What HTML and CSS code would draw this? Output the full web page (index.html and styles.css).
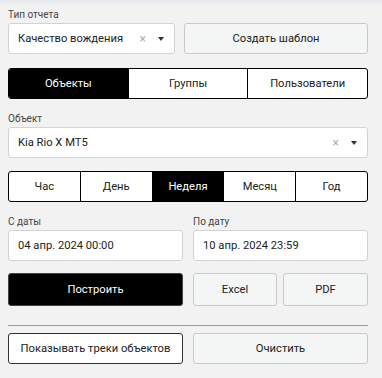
FILE: index.html
```html
<!DOCTYPE html>
<html lang="ru">
<head>
<meta charset="utf-8">
<link rel="stylesheet" href="styles.css">
</head>
<body>
<div class="panel">
  <div class="row-top">
    <div class="field">
      <div class="label">Тип отчета</div>
      <div class="select">
        <span class="value">Качество вождения</span>
        <span class="clear">×</span>
        <span class="caret"></span>
      </div>
    </div>
    <button class="btn btn-light">Создать шаблон</button>
  </div>

  <div class="seg seg-main">
    <div class="seg-item active">Объекты</div>
    <div class="seg-item">Группы</div>
    <div class="seg-item">Пользователи</div>
  </div>

  <div class="field field-obj">
    <div class="label">Объект</div>
    <div class="select">
      <span class="value">Kia Rio X MT5</span>
      <span class="clear">×</span>
      <span class="caret"></span>
    </div>
  </div>

  <div class="seg seg-period">
    <div class="seg-item">Час</div>
    <div class="seg-item">День</div>
    <div class="seg-item active">Неделя</div>
    <div class="seg-item">Месяц</div>
    <div class="seg-item">Год</div>
  </div>

  <div class="row-dates">
    <div class="field">
      <div class="label">С даты</div>
      <div class="input">04 апр. 2024 00:00</div>
    </div>
    <div class="field">
      <div class="label">По дату</div>
      <div class="input">10 апр. 2024 23:59</div>
    </div>
  </div>

  <div class="row-actions">
    <button class="btn btn-dark">Построить</button>
    <div class="exports">
      <button class="btn btn-light">Excel</button>
      <button class="btn btn-light">PDF</button>
    </div>
  </div>

  <div class="sep"></div>

  <div class="row-bottom">
    <button class="btn btn-white">Показывать треки объектов</button>
    <button class="btn btn-light">Очистить</button>
  </div>
</div>
</body>
</html>
```

FILE: styles.css
```css
* { box-sizing: border-box; }
html, body {
  margin: 0;
  padding: 0;
}
body {
  width: 382px;
  height: 378px;
  background: linear-gradient(to bottom, #e6e8ee 0, #f1f1f2 5px, #f2f2f2 8px);
  font-family: Roboto, "Liberation Sans", sans-serif;
  font-size: 11.2px;
  color: #222;
  overflow: hidden;
}
.panel {
  width: 360px;
  margin-left: 8px;
  padding-top: 9px;
  display: flex;
  flex-direction: column;
}
.label {
  font-size: 10px;
  line-height: 12px;
  height: 12px;
  margin-bottom: 2px;
  color: #444;
}
.row-top {
  display: grid;
  grid-template-columns: 167px 1fr;
  column-gap: 9px;
  align-items: end;
}
.select, .input {
  height: 31px;
  background: #fff;
  border: 1px solid #d3d3d3;
  border-radius: 3px;
  display: flex;
  align-items: center;
  padding: 0 9px;
}
.select .value { flex: 1; }
.select .clear {
  color: #b0b0b0;
  font-size: 12px;
  margin-right: 12px;
  line-height: 1;
}
.caret {
  width: 0;
  height: 0;
  border-left: 3.5px solid transparent;
  border-right: 3.5px solid transparent;
  border-top: 4px solid #333;
  margin-right: 1px;
}
.btn {
  height: 31px;
  font-family: inherit;
  font-size: 11.2px;
  color: #222;
  border-radius: 3px;
  padding: 0;
  cursor: pointer;
}
.btn-light {
  background: #f4f5f5;
  border: 1px solid #c9c9c9;
}
.btn-white {
  background: #fff;
  border: 1px solid #333;
}
.btn-dark {
  background: #000;
  color: #fff;
  border: 1px solid #444;
  height: 33px;
}
.seg {
  display: flex;
  height: 31px;
  border: 1px solid #000;
  border-radius: 3px;
  background: #fff;
  overflow: hidden;
}
.seg-item {
  flex: 1;
  display: flex;
  align-items: center;
  justify-content: center;
  border-left: 1px solid #000;
}
.seg-item:first-child { border-left: none; }
.seg-item.active {
  background: #000;
  color: #fff;
}
.seg-main { margin-top: 14px; }
.field-obj { margin-top: 14px; }
.seg-period { margin-top: 13px; }
.row-dates {
  margin-top: 14px;
  display: grid;
  grid-template-columns: 1fr 1fr;
  column-gap: 10px;
}
.row-actions {
  margin-top: 12px;
  display: grid;
  grid-template-columns: 1fr 1fr;
  column-gap: 10px;
}
.exports {
  display: grid;
  grid-template-columns: 84px 1fr;
  column-gap: 6px;
}
.exports .btn { height: 33px; }
.sep {
  margin-top: 19px;
  height: 1px;
  background: #9a9a9a;
}
.row-bottom {
  margin-top: 7px;
  display: grid;
  grid-template-columns: 1fr 1fr;
  column-gap: 10px;
}
```
